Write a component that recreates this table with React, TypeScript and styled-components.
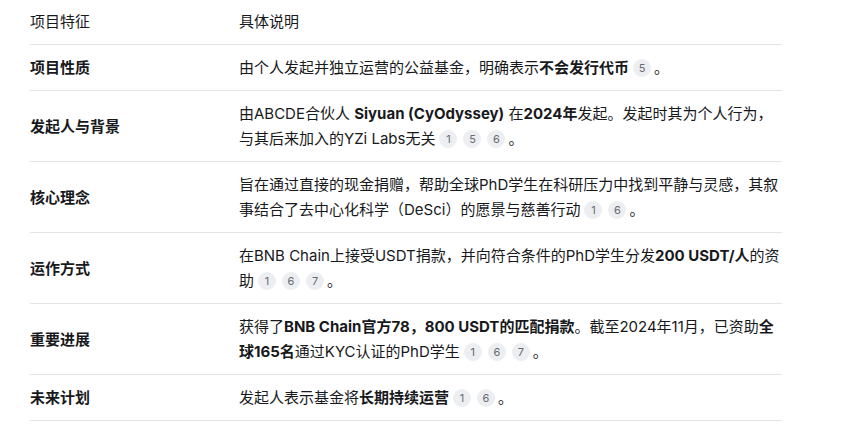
import React from "react";
import styled, { createGlobalStyle } from "styled-components";

const GlobalStyle = createGlobalStyle`
  body {
    margin: 0;
    background: #ffffff;
    font-family: Inter, "Noto Sans CJK SC", sans-serif;
    color: #18191c;
  }
`;

const Page = styled.main`
  padding: 0 0 0 30px;
`;

const Table = styled.table`
  width: 752px;
  border-collapse: collapse;
  font-size: 15px;
  line-height: 25px;
`;

const HeadCell = styled.th`
  text-align: left;
  font-weight: 400;
  padding: 9px 0 10px 0;
  border-bottom: 1px solid #e4e4e6;
`;

const Row = styled.tr`
  border-bottom: 1px solid #e4e4e6;
`;

const Label = styled.td`
  width: 209px;
  padding: 10px 0;
  font-weight: 700;
  vertical-align: middle;
`;

const Desc = styled.td`
  padding: 10px 0;
  vertical-align: middle;
`;

const Strong = styled.b`
  font-weight: 700;
`;

const Badge = styled.span`
  display: inline-flex;
  align-items: center;
  justify-content: center;
  width: 18px;
  height: 18px;
  margin: 0 3px;
  border-radius: 9px;
  background: #eceef1;
  color: #676b72;
  font-size: 11px;
  line-height: 18px;
  vertical-align: 1px;
  &:first-child {
    margin-left: 4px;
  }
`;

const Refs: React.FC<{ ids: number[] }> = ({ ids }) => (
  <span>
    {ids.map((n, i) => (
      <Badge key={i}>{n}</Badge>
    ))}
  </span>
);

type Item = { label: string; desc: React.ReactNode };

const items: Item[] = [
  {
    label: "项目性质",
    desc: (
      <>
        由个人发起并独立运营的公益基金，明确表示<Strong>不会发行代币</Strong>
        <Refs ids={[5]} />。
      </>
    ),
  },
  {
    label: "发起人与背景",
    desc: (
      <>
        由ABCDE合伙人 <Strong>Siyuan (CyOdyssey)</Strong> 在<Strong>2024年</Strong>发起。发起时其为个人行为，
        <br />
        与其后来加入的YZi Labs无关
        <Refs ids={[1, 5, 6]} />。
      </>
    ),
  },
  {
    label: "核心理念",
    desc: (
      <>
        旨在通过直接的现金捐赠，帮助全球PhD学生在科研压力中找到平静与灵感，其叙事结合了去中心化科学（DeSci）的愿景与慈善行动
        <Refs ids={[1, 6]} />。
      </>
    ),
  },
  {
    label: "运作方式",
    desc: (
      <>
        在BNB Chain上接受USDT捐款，并向符合条件的PhD学生分发<Strong>200 USDT/人</Strong>的资助
        <Refs ids={[1, 6, 7]} />。
      </>
    ),
  },
  {
    label: "重要进展",
    desc: (
      <>
        获得了<Strong>BNB Chain官方78，800 USDT的匹配捐款</Strong>。截至2024年11月，已资助
        <Strong>全球165名</Strong>通过KYC认证的PhD学生
        <Refs ids={[1, 6, 7]} />。
      </>
    ),
  },
  {
    label: "未来计划",
    desc: (
      <>
        发起人表示基金将<Strong>长期持续运营</Strong>
        <Refs ids={[1, 6]} />。
      </>
    ),
  },
];

export default function App() {
  return (
    <>
      <GlobalStyle />
      <Page>
        <Table>
          <thead>
            <tr>
              <HeadCell>项目特征</HeadCell>
              <HeadCell>具体说明</HeadCell>
            </tr>
          </thead>
          <tbody>
            {items.map((item) => (
              <Row key={item.label}>
                <Label>{item.label}</Label>
                <Desc>{item.desc}</Desc>
              </Row>
            ))}
          </tbody>
        </Table>
      </Page>
    </>
  );
}
